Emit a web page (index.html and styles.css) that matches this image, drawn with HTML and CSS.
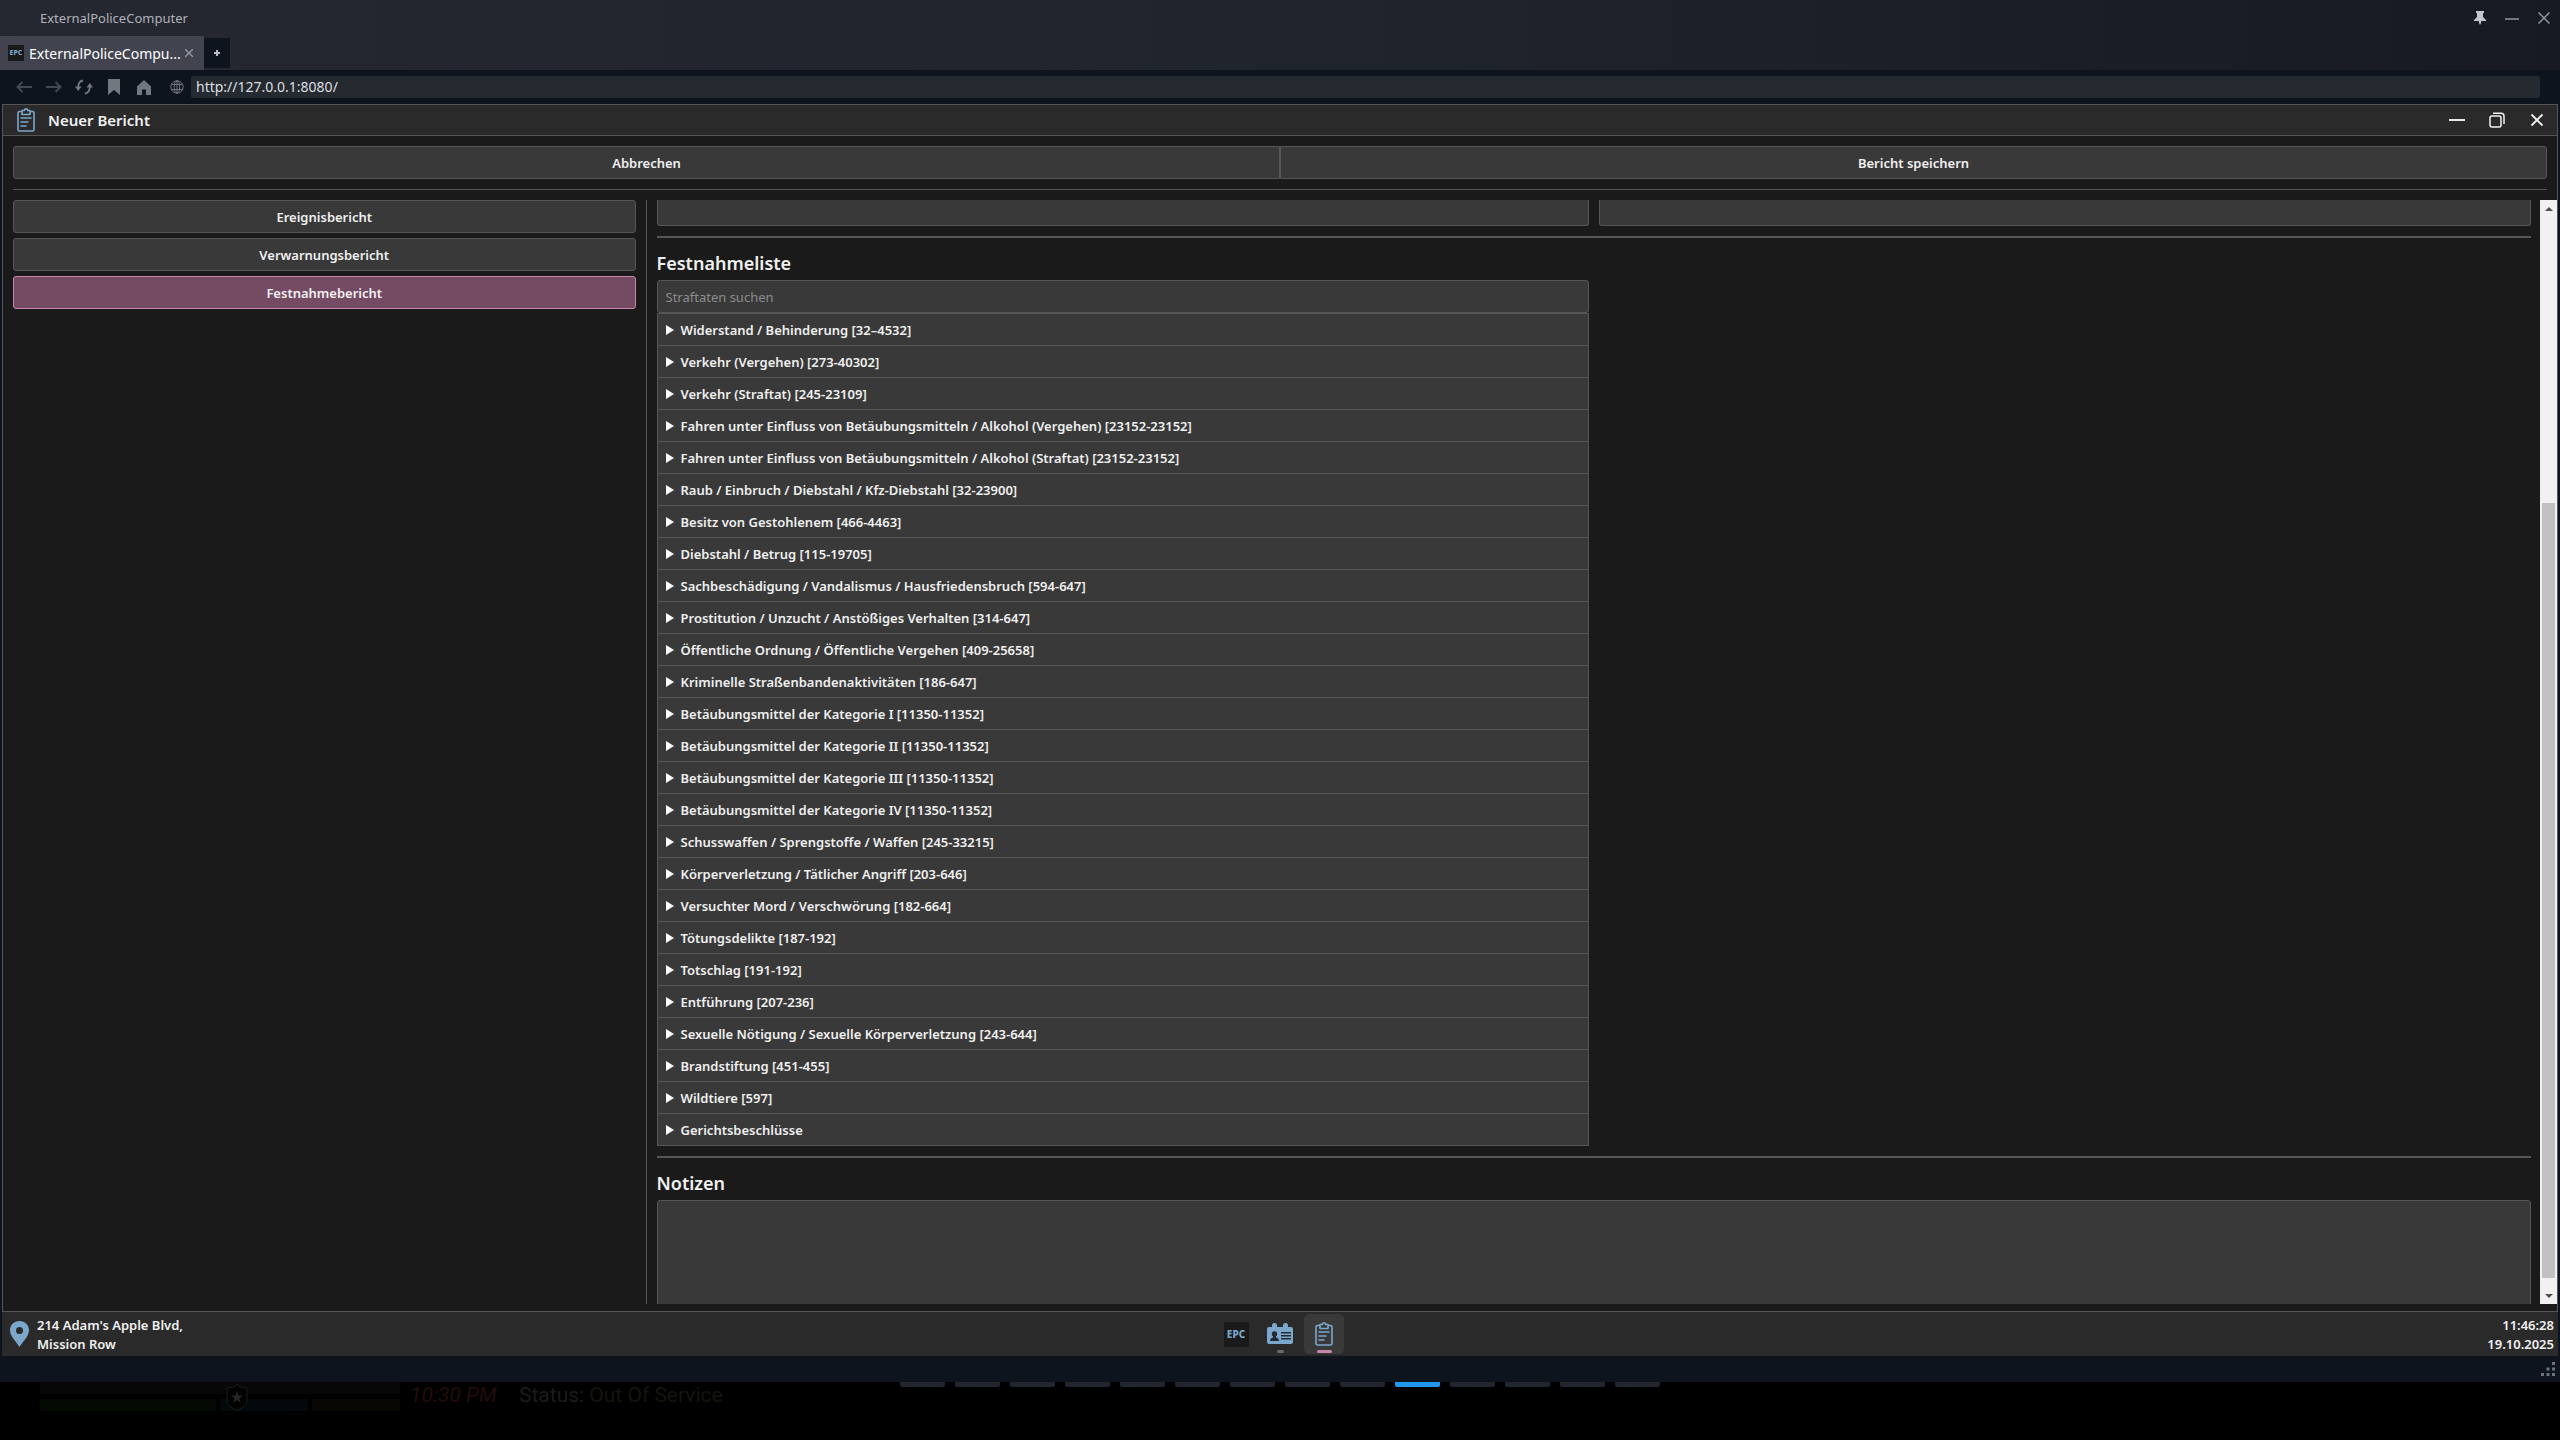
FILE: index.html
```html
<!DOCTYPE html>
<html lang="de">
<head>
    <meta charset="UTF-8">
    <meta name="viewport" content="width=device-width, initial-scale=1.0">
    <title>ExternalPoliceComputer</title>
    <link rel="stylesheet" href="styles.css">
</head>
<body>
    <div class="browser">
        <header class="browser-top">
            <div class="browser-title">
                <span>ExternalPoliceComputer</span>
                <div class="browser-controls">
                    <button type="button" aria-label="Anheften">
                        <svg width="14" height="16" viewBox="0 0 14 16"><path d="M3 1h8v2h-1v4l3 3v1H8v2l-1 2-1-2v-2H1v-1l3-3V3H3z" fill="#c3c6cc"/></svg>
                    </button>
                    <button type="button" aria-label="Minimieren">
                        <svg width="14" height="14" viewBox="0 0 14 14"><path d="M0 8h14" stroke="#6f7a82" stroke-width="2"/></svg>
                    </button>
                    <button type="button" aria-label="Schließen">
                        <svg width="14" height="14" viewBox="0 0 14 14"><path d="M1.500 1.500l11 11M12.500 1.500l-11 11" stroke="#8a999c" stroke-width="1.500"/></svg>
                    </button>
                </div>
            </div>
            <div class="browser-tabs">
                <div class="tab">
                    <span class="favicon">EPC</span>
                    <span class="tab-title">ExternalPoliceCompu...</span>
                    <button type="button" aria-label="Tab schließen">
                        <svg width="8" height="8" viewBox="0 0 8 8"><path d="M0 0l8 8M8 0L0 8" stroke="#9a9da6" stroke-width="1.300"/></svg>
                    </button>
                </div>
                <button type="button" class="new-tab" aria-label="Neuer Tab">
                    <svg width="6" height="6" viewBox="0 0 6 6"><path d="M0 3h6M3 0v6" stroke="#b9bcc2" stroke-width="2"/></svg>
                </button>
            </div>
        </header>

        <nav class="browser-nav">
            <button type="button" aria-label="Zurück">
                <svg width="16" height="12" viewBox="0 0 16 12"><path d="M16 6H1.500M6.500 1l-5 5 5 5" fill="none" stroke="#434953" stroke-width="2"/></svg>
            </button>
            <button type="button" aria-label="Vor">
                <svg width="16" height="12" viewBox="0 0 16 12"><path d="M0 6h14.500M9.500 1l5 5-5 5" fill="none" stroke="#434953" stroke-width="2"/></svg>
            </button>
            <button type="button" aria-label="Neu laden">
                <svg width="18" height="16" viewBox="0 0 18 16"><path d="M8 1.500C5 2 3.200 4.500 3.200 8.500M10 14.500c3-.5 4.800-3 4.800-7" fill="none" stroke="#737780" stroke-width="1.800"/><path d="M0 7.500h6.500L3.200 12zM11.500 8.500H18L14.800 4z" fill="#737780"/></svg>
            </button>
            <button type="button" aria-label="Lesezeichen">
                <svg width="12" height="16" viewBox="0 0 12 16"><path d="M0 0h12v16l-6-5-6 5z" fill="#737780"/></svg>
            </button>
            <button type="button" aria-label="Startseite">
                <svg width="14" height="15" viewBox="0 0 14 15"><path d="M7 0l7 6.500V15H9V9.500H5V15H0V6.500z" fill="#737780"/></svg>
            </button>
            <label class="url" for="url" aria-label="Adresse">
                <svg width="14" height="14" viewBox="0 0 14 14" fill="none" stroke="#737780"><circle cx="7" cy="7" r="6.200"/><ellipse cx="7" cy="7" rx="2.800" ry="6.200"/><path d="M7 .8v12.400M1.500 4.500h11M1.500 9.500h11"/></svg>
                <input type="text" id="url" value="http://127.0.0.1:8080/">
            </label>
        </nav>

        <div class="desktop">
            <section class="window">
                <header class="window-header">
                    <svg width="18" height="24" viewBox="0 0 18 24" fill="none" stroke="#7ba7cb" stroke-width="1.600" stroke-linejoin="round"><path d="M5 3.500H2.500Q1 3.500 1 5v16.500Q1 23 2.500 23h13q1.500 0 1.500-1.500V5q0-1.500-1.500-1.500H13"/><path d="M5 6.500v-4h2.200L8 1h2l.8 1.500H13v4z"/><path d="M4 10h10M4 14h7M4 18h5" stroke-linecap="round"/></svg>
                    <h1>Neuer Bericht</h1>
                    <div class="window-controls">
                        <button type="button" aria-label="Minimieren">
                            <svg width="16" height="16" viewBox="0 0 16 16"><path d="M0 8h16" stroke="#e8e8e8" stroke-width="2"/></svg>
                        </button>
                        <button type="button" aria-label="Wiederherstellen">
                            <svg width="16" height="16" viewBox="0 0 16 16" fill="none" stroke="#f2f2f2" stroke-width="1.500"><rect x="1" y="4" width="11" height="11" rx="2"/><path d="M4 1.200h8q3 0 3 3V12"/></svg>
                        </button>
                        <button type="button" aria-label="Schließen">
                            <svg width="16" height="16" viewBox="0 0 16 16"><path d="M2.500 2.500l11 11M13.500 2.500l-11 11" stroke="#f2f2f2" stroke-width="1.800"/></svg>
                        </button>
                    </div>
                </header>

                <div class="window-body">
                    <div class="actions">
                        <button type="button" class="btn">Abbrechen</button>
                        <button type="button" class="btn">Bericht speichern</button>
                    </div>
                    <hr class="thin">
                    <div class="columns">
                        <aside class="sidebar">
                            <button type="button" class="btn">Ereignisbericht</button>
                            <button type="button" class="btn">Verwarnungsbericht</button>
                            <button type="button" class="btn selected">Festnahmebericht</button>
                        </aside>
                        <div class="scroller">
                            <main class="report">
                                <div class="two-cols">
                                    <input type="text" class="field cut" aria-label="Ort">
                                    <input type="text" class="field cut" aria-label="Bezirk">
                                </div>
                                <hr>
                                <h2>Festnahmeliste</h2>
                                <div class="two-cols">
                                    <div class="charges">
                                        <input type="text" class="field" placeholder="Straftaten suchen" aria-label="Straftaten suchen">
                                        <div class="charge-list">
                                            <details><summary>Widerstand / Behinderung [32–4532]</summary></details>
                                            <details><summary>Verkehr (Vergehen) [273-40302]</summary></details>
                                            <details><summary>Verkehr (Straftat) [245-23109]</summary></details>
                                            <details><summary>Fahren unter Einfluss von Betäubungsmitteln / Alkohol (Vergehen) [23152-23152]</summary></details>
                                            <details><summary>Fahren unter Einfluss von Betäubungsmitteln / Alkohol (Straftat) [23152-23152]</summary></details>
                                            <details><summary>Raub / Einbruch / Diebstahl / Kfz-Diebstahl [32-23900]</summary></details>
                                            <details><summary>Besitz von Gestohlenem [466-4463]</summary></details>
                                            <details><summary>Diebstahl / Betrug [115-19705]</summary></details>
                                            <details><summary>Sachbeschädigung / Vandalismus / Hausfriedensbruch [594-647]</summary></details>
                                            <details><summary>Prostitution / Unzucht / Anstößiges Verhalten [314-647]</summary></details>
                                            <details><summary>Öffentliche Ordnung / Öffentliche Vergehen [409-25658]</summary></details>
                                            <details><summary>Kriminelle Straßenbandenaktivitäten [186-647]</summary></details>
                                            <details><summary>Betäubungsmittel der Kategorie I [11350-11352]</summary></details>
                                            <details><summary>Betäubungsmittel der Kategorie II [11350-11352]</summary></details>
                                            <details><summary>Betäubungsmittel der Kategorie III [11350-11352]</summary></details>
                                            <details><summary>Betäubungsmittel der Kategorie IV [11350-11352]</summary></details>
                                            <details><summary>Schusswaffen / Sprengstoffe / Waffen [245-33215]</summary></details>
                                            <details><summary>Körperverletzung / Tätlicher Angriff [203-646]</summary></details>
                                            <details><summary>Versuchter Mord / Verschwörung [182-664]</summary></details>
                                            <details><summary>Tötungsdelikte [187-192]</summary></details>
                                            <details><summary>Totschlag [191-192]</summary></details>
                                            <details><summary>Entführung [207-236]</summary></details>
                                            <details><summary>Sexuelle Nötigung / Sexuelle Körperverletzung [243-644]</summary></details>
                                            <details><summary>Brandstiftung [451-455]</summary></details>
                                            <details><summary>Wildtiere [597]</summary></details>
                                            <details><summary>Gerichtsbeschlüsse</summary></details>
                                        </div>
                                    </div>
                                </div>
                                <hr>
                                <h2><label for="notes">Notizen</label></h2>
                                <textarea id="notes" class="field notes"></textarea>
                            </main>
                            <div class="scrollbar">
                                <button type="button" class="up" aria-label="Nach oben"></button>
                                <div class="track-top"></div>
                                <div class="thumb"></div>
                                <div class="track-bottom"></div>
                                <button type="button" class="down" aria-label="Nach unten"></button>
                            </div>
                        </div>
                    </div>
                </div>
            </section>

            <footer class="taskbar">
                <div class="location">
                    <svg width="19" height="26" viewBox="0 0 19 26"><path d="M9.500 0C4 0 0 4 0 9.300 0 15 5.500 20 9.500 26 13.500 20 19 15 19 9.300 19 4 15 0 9.500 0zm0 6a3.500 3.500 0 110 7 3.500 3.500 0 010-7z" fill="#7ba7cb" fill-rule="evenodd"/></svg>
                    <p>214 Adam's Apple Blvd,<br>Mission Row</p>
                </div>
                <div class="apps">
                    <button type="button" class="app" aria-label="Startmenü"><span class="epc">EPC</span></button>
                    <button type="button" class="app open" aria-label="Personensuche">
                        <svg width="26" height="22" viewBox="0 0 26 22"><path d="M5 4V2q0-2 2.500-2T10 2v2h6V2q0-2 2.500-2T21 2v2h3q2 0 2 2v13q0 2-2 2H2q-2 0-2-2V6q0-2 2-2z" fill="#7ba7cb"/><circle cx="7.500" cy="11" r="2.700" fill="#222b33"/><path d="M3 18q0-3 3-3.500V12h3v2.500q3 .5 3 3.500zM14 9h10v1.500H14zM14 12h10v1.500H14zM14 15h10v1.500H14z" fill="#222b33"/></svg>
                    </button>
                    <button type="button" class="app open active" aria-label="Berichte">
                        <svg width="18" height="24" viewBox="0 0 18 24" fill="none" stroke="#7ba7cb" stroke-width="1.600" stroke-linejoin="round"><path d="M5 3.500H2.500Q1 3.500 1 5v16.500Q1 23 2.500 23h13q1.500 0 1.500-1.500V5q0-1.500-1.500-1.500H13"/><path d="M5 6.500v-4h2.200L8 1h2l.8 1.500H13v4z"/><path d="M4 10h10M4 14h7M4 18h5" stroke-linecap="round"/></svg>
                    </button>
                </div>
                <p class="clock">11:46:28<br>19.10.2025</p>
            </footer>
        </div>

        <div class="browser-bottom">
            <svg width="14" height="14" viewBox="0 0 14 14" fill="#6a727c"><path d="M11 0h3v3h-3zM5.500 5.500h3v3h-3zM11 5.500h3v3h-3zM0 11h3v3H0zM5.500 11h3v3h-3zM11 11h3v3h-3z"/></svg>
        </div>
    </div>

    <div class="game">
        <div class="hud">
            <div class="bars">
                <div class="bar-top"></div>
                <div class="bar-row">
                    <span class="health"></span>
                    <span class="armor"></span>
                    <span class="stamina"></span>
                </div>
                <svg class="badge" width="24" height="28" viewBox="0 0 24 28"><path d="M12 1l3 3 7 1v13q0 6-10 9Q2 24 2 18V5l7-1z" fill="#020202" stroke="#1b1b1b"/><path d="M12 8l1.500 4.500H18l-3.600 2.700L15.800 20 12 17l-3.800 3 1.400-4.800L6 12.500h4.500z" fill="#262626"/></svg>
            </div>
            <span class="game-time">10:30 PM</span>
            <span class="game-status">Status: <span>Out Of Service</span></span>
        </div>
        <div class="slots">
            <i></i><i></i><i></i><i></i><i></i><i></i><i></i><i></i><i></i><i class="current"></i><i></i><i></i><i></i><i></i>
        </div>
    </div>
</body>
</html>
```
FILE: styles.css
```css
* {
    margin: 0;
    padding: 0;
    box-sizing: border-box;
}

body {
    display: flex;
    flex-direction: column;
    height: 100vh;
    overflow: hidden;
    background: #000;
    color: #f0f0f0;
    font: 600 13px/19px "Noto Sans", "Open Sans", sans-serif;
}

button {
    display: flex;
    align-items: center;
    justify-content: center;
    background: none;
    border: none;
    color: inherit;
    font: inherit;
    cursor: pointer;
}

svg {
    display: block;
    flex: none;
}

hr {
    flex: none;
    height: 2px;
    border: none;
    background: #565656;
    margin: 10px 0;
}

hr.thin {
    height: 1px;
}

/* Browser */
.browser {
    flex: 1;
    min-height: 0;
    display: flex;
    flex-direction: column;
    background: #0d141d;
}

.browser-top {
    background: linear-gradient(90deg, #252731, #20242d 50%, #171a22);
}

.browser-title {
    display: flex;
    align-items: center;
    justify-content: space-between;
    height: 36px;
    padding: 0 9px 0 40px;
    color: #b0b2b7;
    font-weight: 400;
}

.browser-controls {
    display: flex;
    gap: 18px;
}

.browser-tabs {
    display: flex;
    align-items: center;
    height: 34px;
}

.tab {
    display: flex;
    align-items: center;
    gap: 5px;
    height: 34px;
    padding: 0 11px 0 8px;
    background: #41444f;
    color: #fff;
    font-size: 14px;
    font-weight: 400;
}

.tab-title {
    width: 151px;
    white-space: nowrap;
}

.favicon {
    width: 16px;
    height: 16px;
    background: #1a1a1a;
    color: #7ba7cb;
    font-size: 7px;
    font-weight: 800;
    line-height: 16px;
    text-align: center;
}

.new-tab {
    width: 26px;
    height: 30px;
    background: #0d141d;
}

.browser-nav {
    display: flex;
    align-items: center;
    height: 34px;
    padding: 0 20px 0 9px;
}

.browser-nav button {
    width: 30px;
    height: 30px;
}

.url {
    flex: 1;
    display: flex;
    align-items: center;
    gap: 7px;
    padding-left: 11px;
}

.url input {
    flex: 1;
    height: 22px;
    padding: 0 5px 1px;
    background: #252a31;
    border: none;
    border-radius: 2px;
    color: #dcdee1;
    font: 400 14px "Noto Sans", "Open Sans", sans-serif;
}

.browser-bottom {
    display: flex;
    align-items: center;
    justify-content: flex-end;
    height: 26px;
    padding-right: 5px;
}

/* Desktop */
.desktop {
    flex: 1;
    min-height: 0;
    display: flex;
    flex-direction: column;
    margin: 0 2px;
}

.window {
    flex: 1;
    min-height: 0;
    display: flex;
    flex-direction: column;
    background: #1a1a1a;
    border: 1px solid #565656;
}

.window-header {
    display: flex;
    align-items: center;
    gap: 13px;
    height: 31px;
    padding: 0 12px 0 14px;
    background: #2a2a2a;
    border-bottom: 1px solid #565656;
}

.window-header h1 {
    flex: 1;
    padding-top: 1px;
    font-size: 15px;
    font-weight: 600;
}

.window-controls {
    display: flex;
    gap: 24px;
}

.window-body {
    flex: 1;
    min-height: 0;
    display: flex;
    flex-direction: column;
    padding: 10px 10px 7px;
}

.btn,
.field {
    width: 100%;
    height: 33px;
    background: #393939;
    border: 1px solid #565656;
    border-radius: 3px;
}

.btn {
    padding-top: 2px;
}

.btn.selected {
    background: #754a63;
    border-color: #c486ab;
}

.actions {
    display: flex;
}

.actions .btn:first-child {
    border-radius: 3px 0 0 3px;
}

.actions .btn:last-child {
    border-radius: 0 3px 3px 0;
}

.columns {
    flex: 1;
    min-height: 0;
    display: grid;
    grid-template-columns: 1fr 3fr;
    grid-template-rows: 100%;
    gap: 10px;
    margin-right: -10px;
}

.sidebar {
    display: flex;
    flex-direction: column;
    gap: 5px;
    padding-right: 10px;
    border-right: 1px solid #565656;
}

.scroller {
    display: flex;
    gap: 9px;
    overflow: hidden;
}

.report {
    flex: 1;
    display: flex;
    flex-direction: column;
    overflow: hidden;
}

.two-cols {
    display: grid;
    grid-template-columns: 1fr 1fr;
    gap: 10px;
}

.field {
    padding: 0 8px;
    color: #f0f0f0;
    font: 400 13px "Noto Sans", "Open Sans", sans-serif;
}

.field::placeholder {
    color: #8c8c8c;
}

.field.cut {
    height: 26px;
    border-top: none;
    border-radius: 0 0 3px 3px;
}

.report h2 {
    padding-top: 2px;
    margin-bottom: 3px;
    font-size: 18px;
    font-weight: 600;
    line-height: 27px;
}

.charges {
    display: flex;
    flex-direction: column;
}

.charge-list {
    background: #393939;
    border: 1px solid #565656;
    border-bottom: none;
}

.charge-list summary {
    display: flex;
    align-items: center;
    gap: 7px;
    height: 32px;
    padding: 1px 8px 0;
    border-bottom: 1px solid #565656;
    cursor: pointer;
}

.charge-list summary::before {
    content: "";
    border-left: 8px solid #fff;
    border-top: 5px solid transparent;
    border-bottom: 5px solid transparent;
}

.notes {
    flex: none;
    height: 116px;
    resize: vertical;
}

/* Scrollbar */
.scrollbar {
    display: flex;
    flex-direction: column;
    width: 17px;
    background: #f1f1f1;
}

.scrollbar button {
    height: 17px;
}

.scrollbar button::before {
    content: "";
    border: 4px solid transparent;
}

.scrollbar .up::before {
    border-top: none;
    border-bottom-color: #505050;
}

.scrollbar .down::before {
    border-bottom: none;
    border-top-color: #505050;
}

.track-top {
    flex: 286;
}

.thumb {
    flex: 775;
    margin: 0 2px;
    background: #c1c1c1;
}

.track-bottom {
    flex: 9;
}

/* Taskbar */
.taskbar {
    display: grid;
    grid-template-columns: 1fr auto 1fr;
    align-items: center;
    height: 44px;
    padding: 0 4px 0 8px;
    background: #2a2a2a;
}

.location {
    display: flex;
    align-items: center;
    gap: 8px;
}

.location p,
.clock {
    padding-top: 2px;
}

.apps {
    display: flex;
    gap: 4px;
    margin-right: 4px;
}

.app {
    position: relative;
    width: 40px;
    height: 40px;
    border-radius: 5px;
}

.app.active {
    background: #393939;
}

.app.open::after {
    content: "";
    position: absolute;
    bottom: 1px;
    width: 7px;
    height: 3px;
    border-radius: 2px;
    background: #6a6a6a;
}

.app.active::after {
    width: 15px;
    background: #c486ab;
}

.epc {
    width: 25px;
    height: 25px;
    background: #1a1a1a;
    color: #7ba7cb;
    font-size: 10px;
    font-weight: 800;
    line-height: 25px;
}

.clock {
    text-align: right;
}

/* Game behind the browser */
.game {
    position: relative;
    height: 58px;
    overflow: hidden;
}

.hud {
    display: flex;
    padding-left: 40px;
}

.bars {
    position: relative;
    width: 360px;
    margin-right: 10px;
}

.bar-top {
    height: 12px;
    margin-bottom: 5px;
    background: #070707;
}

.bar-row {
    display: grid;
    grid-template-columns: 2fr 1fr 1fr;
    gap: 4px;
}

.bar-row span {
    height: 12px;
}

.health {
    background: #040904;
}

.armor {
    background: #03080a;
}

.stamina {
    background: #080602;
}

.badge {
    position: absolute;
    left: 185px;
    top: 1px;
}

.game-time {
    width: 109px;
    color: #240c0a;
    font: italic 400 21px/26px Roboto, sans-serif;
}

.game-status {
    color: #1b1b1b;
    font: 400 21px/26px Roboto, sans-serif;
}

.game-status span {
    color: #16140d;
}

.slots {
    position: absolute;
    top: 0;
    left: 0;
    right: 0;
    display: flex;
    justify-content: center;
    gap: 10px;
}

.slots i {
    width: 45px;
    height: 5px;
    border-radius: 0 0 2px 2px;
    background: #22252d;
}

.slots .current {
    background: #2196f0;
}
```
